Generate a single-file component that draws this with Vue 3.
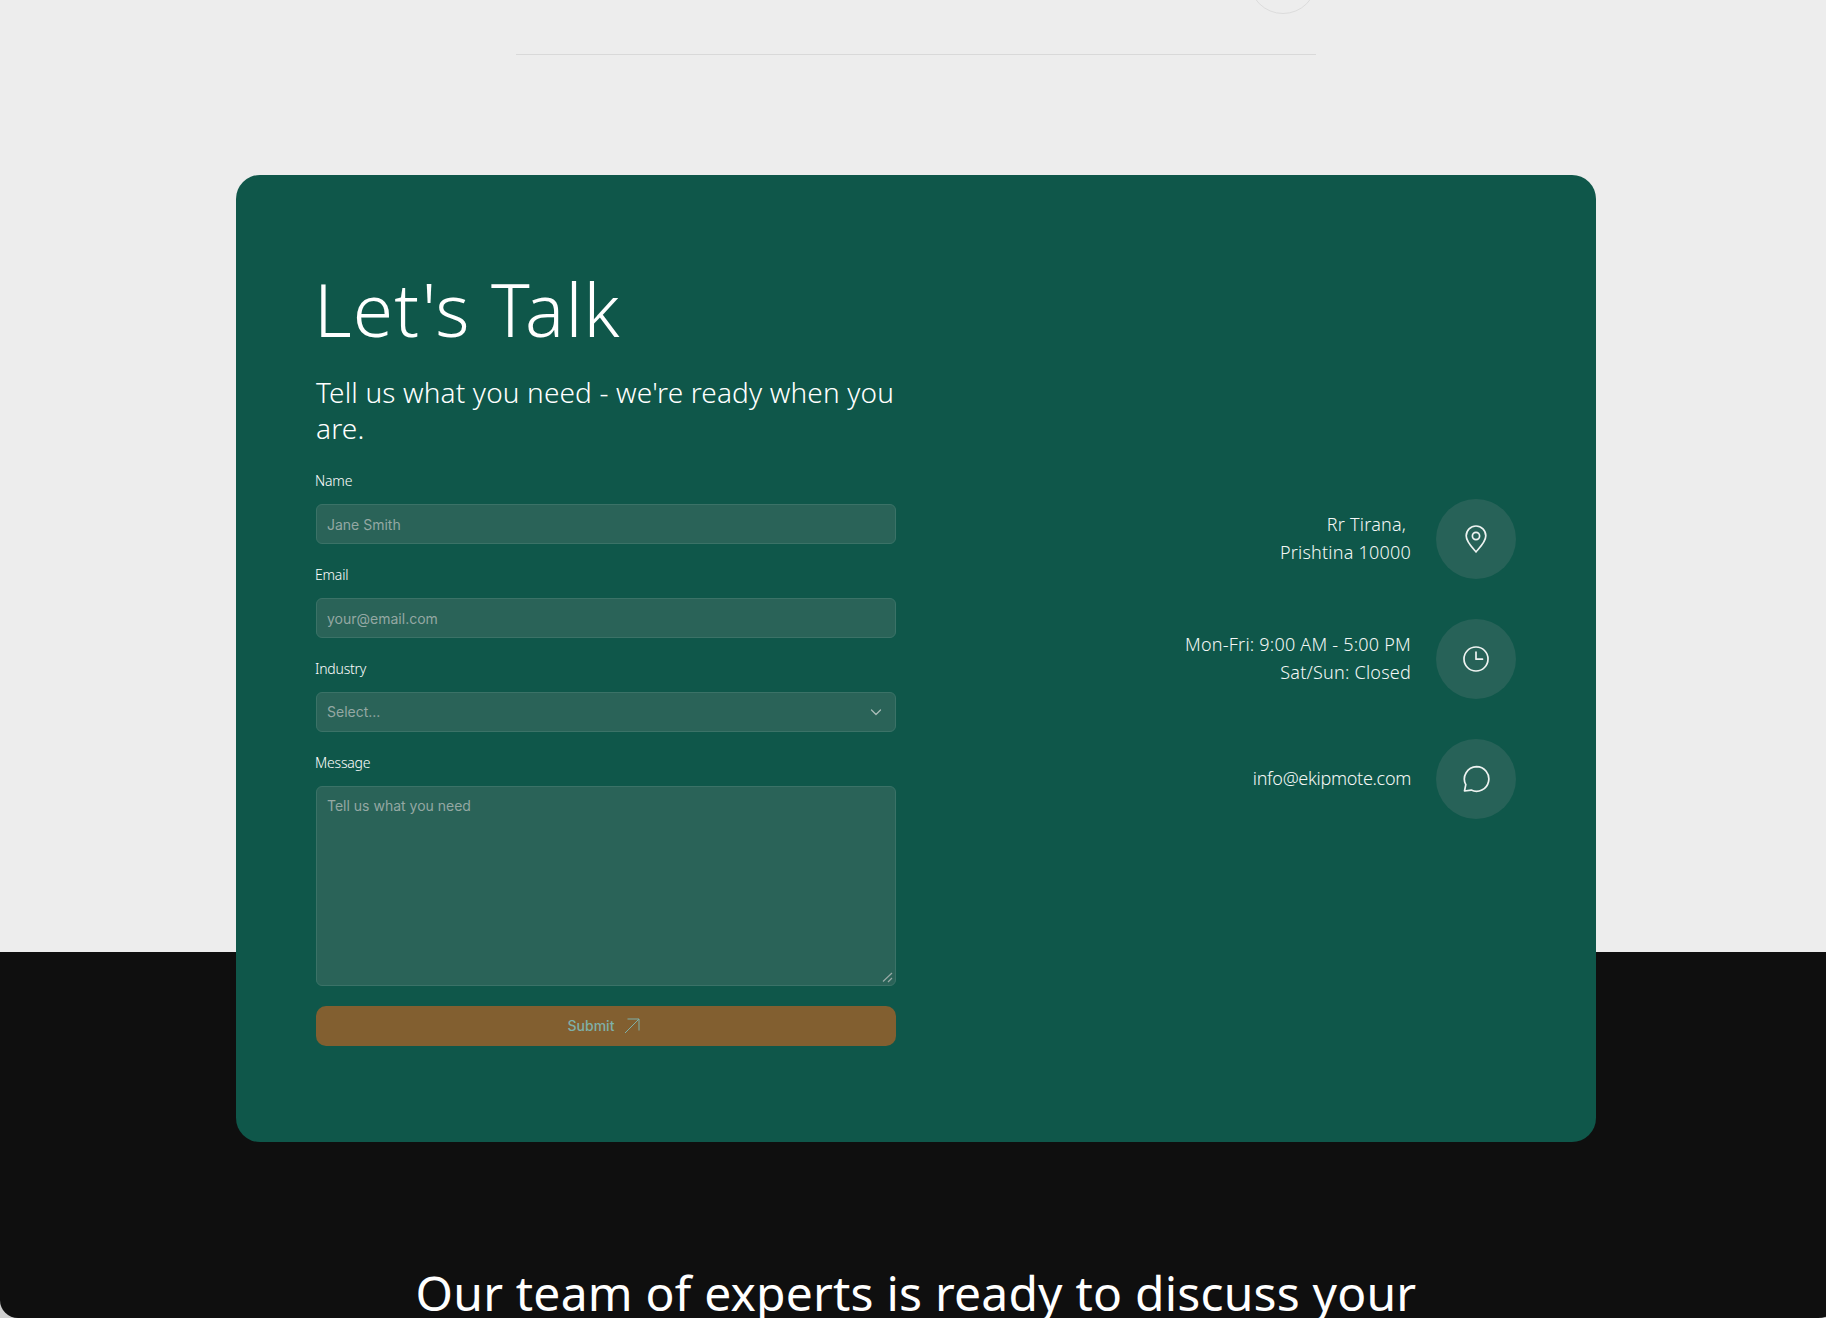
<script setup>
const contacts = [
  { lines: ['Rr Tirana,\u00a0', 'Prishtina 10000'], icon: 'pin' },
  { lines: ['Mon-Fri: 9:00 AM - 5:00 PM', 'Sat/Sun: Closed'], icon: 'clock' },
  { lines: ['info@ekipmote.com'], icon: 'chat' },
]
</script>

<template>
  <div class="page">
    <section class="light">
      <div class="rule-wrap">
        <div class="peek"></div>
        <div class="rule"></div>
      </div>
      <div class="card">
        <div class="form-col">
          <h1>Let's Talk</h1>
          <p class="sub">Tell us what you need - we're ready when you are.</p>
          <form class="form" @submit.prevent>
            <div class="field">
              <label for="f-name">Name</label>
              <input id="f-name" type="text" placeholder="Jane Smith" />
            </div>
            <div class="field">
              <label for="f-email">Email</label>
              <input id="f-email" type="email" placeholder="your@email.com" />
            </div>
            <div class="field">
              <label for="f-ind">Industry</label>
              <div class="select">
                <select id="f-ind"><option>Select...</option></select>
                <svg class="chev" width="14" height="14" viewBox="0 0 14 14" fill="none"><path d="M2.5 5l4.5 4.500L11.500 5" stroke="currentColor" stroke-width="1.300" stroke-linecap="round" stroke-linejoin="round"/></svg>
              </div>
            </div>
            <div class="field">
              <label for="f-msg">Message</label>
              <div class="area">
                <textarea id="f-msg" placeholder="Tell us what you need"></textarea>
                <svg class="grip" width="11" height="11" viewBox="0 0 11 11" fill="none"><path d="M1 9.500L10 1M6 10l4-4" stroke="currentColor" stroke-width="1.200"/></svg>
              </div>
            </div>
            <button type="submit" class="submit">
              <span>Submit</span>
              <svg class="arrow" width="16" height="16" viewBox="0 0 16 16" fill="none"><path d="M1 15L15 1M3.500 1H15V12.500" stroke="currentColor" stroke-width="1"/></svg>
            </button>
          </form>
        </div>
        <ul class="contacts">
          <li v-for="c in contacts" :key="c.icon" class="contact">
            <div class="ctext" :class="{ tight: c.icon === 'chat' }"><div v-for="l in c.lines" :key="l">{{ l }}</div></div>
            <div class="cicon">
              <svg v-if="c.icon === 'pin'" width="28" height="28" viewBox="0 0 28 28" fill="none" stroke="currentColor" stroke-width="1.700" stroke-linejoin="round"><path d="M14 26.900c-1.500-2.200-9.800-9.400-9.800-16.100a9.800 9.800 0 0 1 19.600 0c0 6.700-8.300 13.900-9.800 16.100z"/><circle cx="14" cy="11" r="3.600"/></svg>
              <svg v-else-if="c.icon === 'clock'" width="28" height="28" viewBox="0 0 28 28" fill="none" stroke="currentColor" stroke-width="1.700" stroke-linecap="round" stroke-linejoin="round"><circle cx="14" cy="14" r="12"/><path d="M14 7v7.200h6.500"/></svg>
              <svg v-else width="28" height="28" viewBox="0 0 28 28" fill="none" stroke="currentColor" stroke-width="1.700" stroke-linecap="round" stroke-linejoin="round"><path d="M14.500 1.700a12.300 12.300 0 1 1-5.300 23.400L2.500 26l1.300-6.300A12.300 12.300 0 0 1 14.500 1.700z"/></svg>
            </div>
          </li>
        </ul>
      </div>
    </section>
    <section class="dark">
      <h2>Our team of experts is ready to discuss your</h2>
    </section>
  </div>
</template>

<style>
html, body { margin: 0; background: #ededed; }
</style>

<style scoped>
.page { height: 1318px; overflow: hidden; background: #cfcfcf; font-family: "Noto Sans", sans-serif; }
.light { height: 952px; background: #ededed; }
.rule-wrap { display: flow-root; width: 800px; margin-left: 516px; height: 175px; }
.peek { width: 68px; height: 68px; margin: -54px 0 0 733px; border: 1.500px solid #dcdcdc; border-radius: 50%; box-sizing: border-box; }
.rule { height: 1px; background: #d9d9d9; margin-top: 40px; }
.card { position: relative; z-index: 1; box-sizing: border-box; width: 1360px; height: 967px; margin-left: 236px; padding: 80px; display: flex; justify-content: space-between; align-items: center; background: #0f574a; border-radius: 24px; color: #fff; }
.form-col { width: 580px; align-self: flex-start; }
h1 { margin: 6px 0 0 -2px; font-size: 73px; font-weight: 300; line-height: 96px; letter-spacing: 1.200px; color: #fff; }
.sub { margin: 17px 0 0; font-size: 28px; font-weight: 300; line-height: 36px; letter-spacing: .15px; }
.form { margin-top: 25px; display: flex; flex-direction: column; }
.field { display: flex; flex-direction: column; margin-bottom: 21px; }
label { font: 300 14px/20px "Noto Sans", sans-serif; letter-spacing: -.2px; margin-bottom: 13px; color: #fff; margin-left: -1px; }
input, select, textarea { box-sizing: border-box; width: 100%; padding: 0 10px; height: 40px; background: #2a6358; border: 1px solid #3b7267; border-radius: 6px; color: #94a8a3; font: 400 14px/20px "Inter", sans-serif; outline: none; }
input::placeholder, textarea::placeholder { color: #94a8a3; opacity: 1; }
select { appearance: none; }
.select, .area { position: relative; }
.chev { position: absolute; right: 13px; top: 13px; color: #a9bcb7; }
textarea { height: 200px; padding: 9px 10px; display: block; resize: none; }
.grip { position: absolute; right: 3px; bottom: 3px; color: #98aaa6; }
.submit { height: 40px; margin-top: -1px; display: flex; align-items: center; justify-content: center; gap: 10px; background: #825f30; color: #7fb0a8; border: 0; border-radius: 10px; font: 500 14px/20px "Inter", sans-serif; }
.arrow { margin-right: 4px; }
.contacts { list-style: none; margin: 0; padding: 0; display: flex; flex-direction: column; gap: 40px; }
.contact { display: flex; align-items: center; justify-content: flex-end; gap: 25px; }
.ctext { text-align: right; font-size: 18px; line-height: 28px; padding-bottom: 1px; color: #f4f7f6; font-weight: 300; letter-spacing: .22px; }
.ctext.tight { letter-spacing: -.3px; }
.cicon { width: 80px; height: 80px; border-radius: 50%; background: #276258; color: #eef3f1; display: flex; align-items: center; justify-content: center; }
.dark { height: 365.500px; box-sizing: border-box; margin-right: -16px; background: #0f0f0f; border-radius: 0 0 24px 18px; padding-top: 311px; overflow: hidden; text-align: center; }
h2 { margin: 0 10px 0 0; font-size: 48px; font-weight: 400; line-height: 60px; letter-spacing: .2px; color: #fff; white-space: nowrap; }
</style>
